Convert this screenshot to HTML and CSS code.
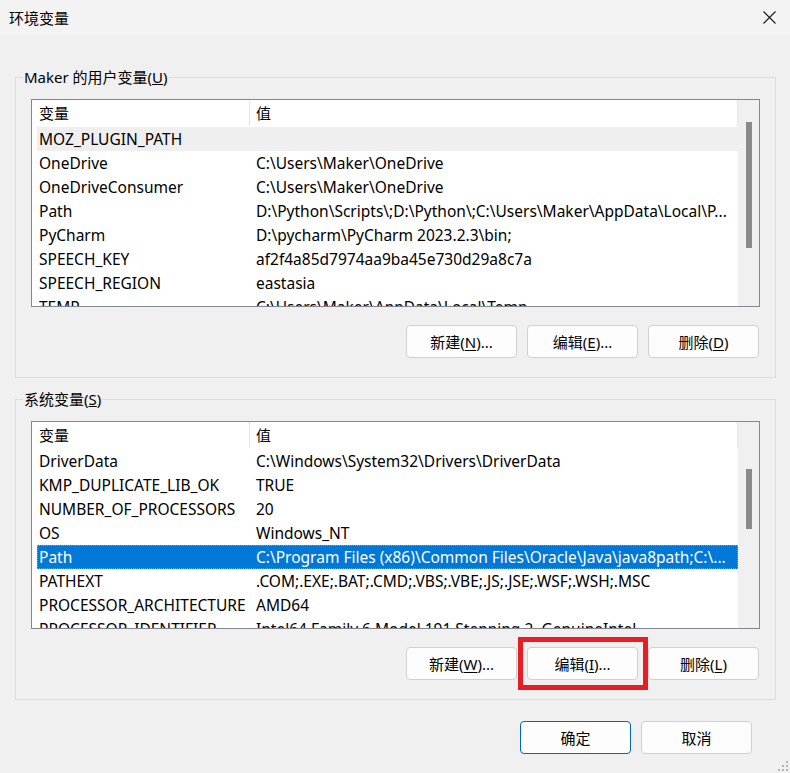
FILE: index.html
```html
<!DOCTYPE html>
<html lang="zh-CN">
<head>
<meta charset="utf-8">
<title>环境变量</title>
<link rel="stylesheet" href="styles.css">
</head>
<body>
<div class="window">
  <div class="titlebar">
    <span class="title">环境变量</span>
    <svg class="close" width="13" height="13" viewBox="0 0 13 13" aria-hidden="true">
      <path d="M0.5 0.5 L12.5 12.5 M12.5 0.5 L0.5 12.5" stroke="#1a1a1a" stroke-width="1.1" fill="none"/>
    </svg>
  </div>

  <fieldset class="group">
    <legend>Maker 的用户变量(<u>U</u>)</legend>
    <div class="list">
      <div class="list-main">
        <div class="list-head">
          <div class="hcol hc1">变量</div>
          <div class="hcol hc2">值</div>
        </div>
        <div class="rows">
          <div class="row hover"><span class="c1">MOZ_PLUGIN_PATH</span><span class="c2"></span></div>
          <div class="row"><span class="c1">OneDrive</span><span class="c2">C:\Users\Maker\OneDrive</span></div>
          <div class="row"><span class="c1">OneDriveConsumer</span><span class="c2">C:\Users\Maker\OneDrive</span></div>
          <div class="row"><span class="c1">Path</span><span class="c2">D:\Python\Scripts\;D:\Python\;C:\Users\Maker\AppData\Local\P...</span></div>
          <div class="row"><span class="c1">PyCharm</span><span class="c2">D:\pycharm\PyCharm 2023.2.3\bin;</span></div>
          <div class="row"><span class="c1">SPEECH_KEY</span><span class="c2">af2f4a85d7974aa9ba45e730d29a8c7a</span></div>
          <div class="row"><span class="c1">SPEECH_REGION</span><span class="c2">eastasia</span></div>
          <div class="row"><span class="c1">TEMP</span><span class="c2">C:\Users\Maker\AppData\Local\Temp</span></div>
        </div>
      </div>
      <div class="scrollbar"><div class="thumb" style="margin-top:22px;height:126px"></div></div>
    </div>
    <div class="actions">
      <button class="btn">新建(<u>N</u>)...</button>
      <button class="btn">编辑(<u>E</u>)...</button>
      <button class="btn">删除(<u>D</u>)</button>
    </div>
  </fieldset>

  <fieldset class="group group-sys">
    <legend>系统变量(<u>S</u>)</legend>
    <div class="list">
      <div class="list-main">
        <div class="list-head">
          <div class="hcol hc1">变量</div>
          <div class="hcol hc2">值</div>
        </div>
        <div class="rows">
          <div class="row"><span class="c1">DriverData</span><span class="c2">C:\Windows\System32\Drivers\DriverData</span></div>
          <div class="row"><span class="c1">KMP_DUPLICATE_LIB_OK</span><span class="c2">TRUE</span></div>
          <div class="row"><span class="c1">NUMBER_OF_PROCESSORS</span><span class="c2">20</span></div>
          <div class="row"><span class="c1">OS</span><span class="c2">Windows_NT</span></div>
          <div class="row selected"><span class="c1">Path</span><span class="c2">C:\Program Files (x86)\Common Files\Oracle\Java\java8path;C:\...</span></div>
          <div class="row"><span class="c1">PATHEXT</span><span class="c2">.COM;.EXE;.BAT;.CMD;.VBS;.VBE;.JS;.JSE;.WSF;.WSH;.MSC</span></div>
          <div class="row"><span class="c1">PROCESSOR_ARCHITECTURE</span><span class="c2">AMD64</span></div>
          <div class="row"><span class="c1">PROCESSOR_IDENTIFIER</span><span class="c2">Intel64 Family 6 Model 191 Stepping 2, GenuineIntel</span></div>
        </div>
      </div>
      <div class="scrollbar"><div class="thumb" style="margin-top:47px;height:60px"></div></div>
    </div>
    <div class="actions">
      <button class="btn">新建(<u>W</u>)...</button>
      <span class="marked"><button class="btn">编辑(<u>I</u>)...</button></span>
      <button class="btn">删除(<u>L</u>)</button>
    </div>
  </fieldset>

  <div class="footer">
    <button class="btn btn-default">确定</button>
    <button class="btn">取消</button>
  </div>

  <svg class="grip" width="10" height="10" viewBox="0 0 10 10" aria-hidden="true">
    <rect x="8" y="0" width="2" height="2" fill="#b4b4b4"/>
    <rect x="4" y="4" width="2" height="2" fill="#b4b4b4"/>
    <rect x="8" y="4" width="2" height="2" fill="#b4b4b4"/>
    <rect x="0" y="8" width="2" height="2" fill="#b4b4b4"/>
    <rect x="4" y="8" width="2" height="2" fill="#b4b4b4"/>
    <rect x="8" y="8" width="2" height="2" fill="#b4b4b4"/>
  </svg>
</div>
</body>
</html>
```

FILE: styles.css
```css
* {
  box-sizing: border-box;
}

html, body {
  margin: 0;
  padding: 0;
  background: #f0f0f0;
}

body {
  font-family: "Noto Sans", "Noto Sans CJK SC", sans-serif;
  font-size: 15px;
  color: #000;
}

.window {
  position: relative;
  width: 790px;
  height: 773px;
  overflow: hidden;
  background: #f0f0f0;
}

/* title bar */
.titlebar {
  height: 35px;
  background: #f3f3f3;
  display: flex;
  align-items: center;
  justify-content: space-between;
  padding: 0 14px 0 9px;
}

.title {
  font-size: 15px;
  line-height: 20px;
}

.close {
  display: block;
}

/* group boxes */
.group {
  margin: 32px 14px 0 15px;
  padding: 11px 15px 19px 15px;
  border: 1px solid #dcdcdc;
  min-width: 0;
}

.group-sys {
  margin-top: 11px;
}

.group legend {
  margin-left: -8px;
  padding: 0 1px;
  line-height: 21px;
}

/* list view */
.list {
  height: 208px;
  border: 1px solid #828790;
  background: #fff;
  display: flex;
  overflow: hidden;
}

.list-main {
  flex: 1;
  min-width: 0;
  display: flex;
  flex-direction: column;
}

.list-head {
  height: 27px;
  display: flex;
  flex: none;
}

.hcol {
  line-height: 26px;
  height: 26px;
  border-right: 1px solid #e5e5e5;
}

.hc1 {
  width: 218px;
  padding-left: 7px;
}

.hc2 {
  flex: 1;
  padding-left: 6px;
}

.rows {
  padding-left: 5px;
}

.row {
  display: flex;
  height: 24px;
  line-height: 24px;
  font-size: 15.5px;
  white-space: nowrap;
}

.row .c1 {
  width: 212px;
  flex: none;
  padding-left: 2px;
  overflow: hidden;
}

.row .c2 {
  flex: 1;
  padding-left: 7px;
  overflow: hidden;
}

.row.hover {
  background: #efefef;
}

.row.selected {
  background: #0078d7;
  color: #fff;
  outline: 1px dotted #e0883c;
  outline-offset: -1px;
}

.scrollbar {
  width: 21px;
  flex: none;
  background: #f0f0f0;
  display: flex;
  justify-content: center;
}

.thumb {
  width: 6px;
  background: #8a8a8a;
}

/* buttons */
.actions {
  display: flex;
  justify-content: flex-end;
  gap: 10px;
  margin-top: 18px;
  padding-right: 1px;
}

.btn {
  width: 111px;
  height: 33px;
  padding: 0;
  font-family: inherit;
  font-size: 15px;
  color: #000;
  background: #fdfdfd;
  border: 1px solid #d0d0d0;
  border-radius: 4px;
  display: block;
}

.btn u {
  text-decoration-thickness: 1px;
  text-underline-offset: 2px;
}

.btn-default {
  border-color: #0067c0;
}

.marked {
  position: relative;
  display: block;
}

.marked::after {
  content: "";
  position: absolute;
  top: -10px;
  bottom: -10px;
  left: -9px;
  right: -10px;
  border: 5px solid #e81c24;
  pointer-events: none;
}

.footer {
  display: flex;
  justify-content: flex-end;
  gap: 10px;
  margin-top: 21px;
  padding-right: 38px;
}

.grip {
  position: absolute;
  right: 2px;
  bottom: 2px;
}
```
